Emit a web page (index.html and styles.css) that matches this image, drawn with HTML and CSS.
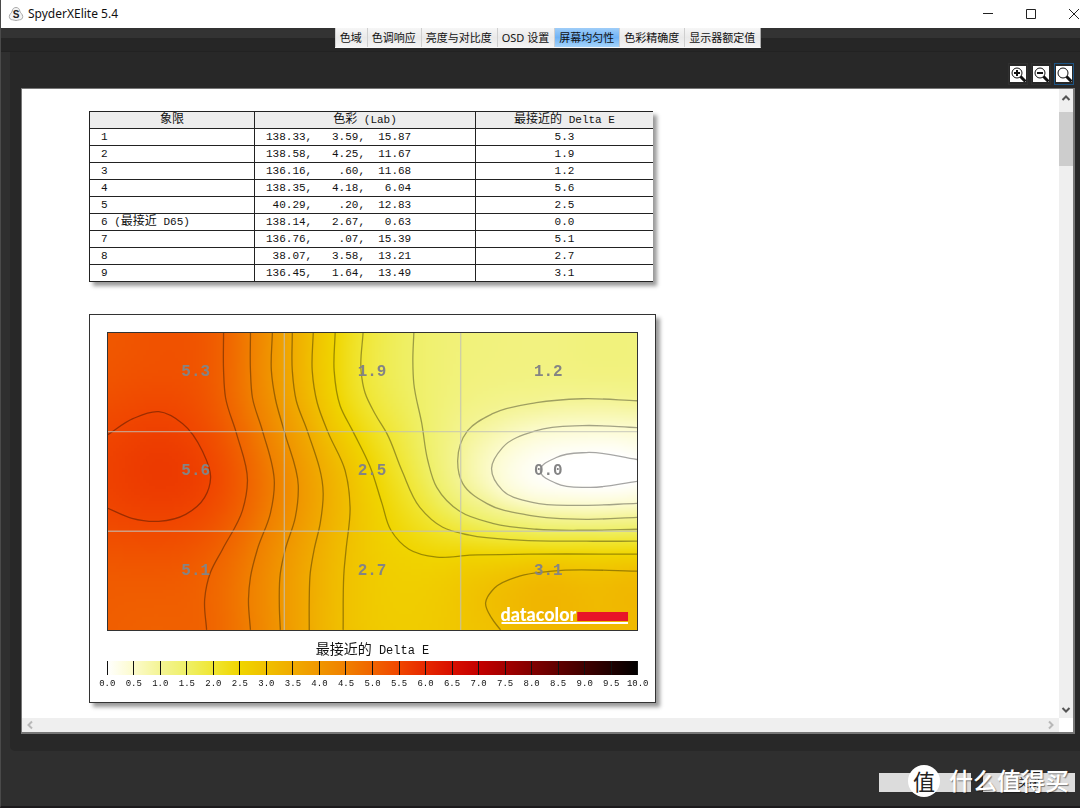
FILE: index.html
```html
<!DOCTYPE html>
<html lang="zh-CN">
<head>
<meta charset="utf-8">
<title>SpyderXElite 5.4</title>
<link rel="stylesheet" href="styles.css">
</head>
<body>
<div class="window">
  <header class="titlebar">
    <svg class="app-icon" viewBox="0 0 16 16" aria-hidden="true">
      <path d="M8 1.500c2.200 0 3.600 1.500 3.800 3.600.2 1.500 2.900 3 2.900 5.400 0 2-1.300 3.300-3.200 3.300-1.200 0-2 .7-3.500.7s-2.300-.7-3.500-.7c-1.900 0-3.200-1.300-3.200-3.300 0-2.400 2.700-3.900 2.900-5.400C4.400 3 5.800 1.500 8 1.500z" fill="#f4f4f4" stroke="#a8a8a8"/>
      <text class="app-icon-letter" x="8" y="12" text-anchor="middle">S</text>
    </svg>
    <h1 class="title">SpyderXElite 5.4</h1>
    <div class="window-controls">
      <button class="window-button" aria-label="最小化"><svg viewBox="0 0 12 12"><path d="M1 5.500h10"/></svg></button>
      <button class="window-button" aria-label="最大化"><svg viewBox="0 0 12 12"><path d="M1.500 1.500h9v9h-9z"/></svg></button>
      <button class="window-button" aria-label="关闭窗口"><svg viewBox="0 0 12 12"><path d="M1 1l10 10M11 1L1 11"/></svg></button>
    </div>
  </header>

  <nav class="tab-row">
    <div class="tabs" role="tablist">
      <button class="tab" role="tab">色域</button>
      <button class="tab" role="tab">色调响应</button>
      <button class="tab" role="tab">亮度与对比度</button>
      <button class="tab" role="tab">OSD 设置</button>
      <button class="tab tab-active" role="tab" aria-selected="true">屏幕均匀性</button>
      <button class="tab" role="tab">色彩精确度</button>
      <button class="tab" role="tab">显示器额定值</button>
    </div>
  </nav>

  <main class="panel">
    <div class="toolbar">
      <button class="tool" aria-label="放大"><svg viewBox="0 0 16 16"><circle cx="7" cy="7" r="5"/><path class="handle" d="M10.500 10.500l5 5"/><path class="sign" d="M4 7h6M7 4v6"/></svg></button>
      <button class="tool" aria-label="缩小"><svg viewBox="0 0 16 16"><circle cx="7" cy="7" r="5"/><path class="handle" d="M10.500 10.500l5 5"/><path class="sign" d="M4 7h6"/></svg></button>
      <button class="tool tool-focus" aria-label="适合窗口"><svg viewBox="0 0 16 16"><circle cx="7" cy="7" r="5"/><path class="handle" d="M10.500 10.500l5 5"/></svg></button>
    </div>

    <div class="viewport">
      <div class="report">
        <table class="results">
          <thead>
            <tr><th class="col-zone"><span class="han">象限</span></th><th class="col-lab"><span class="han">色彩</span> (Lab)</th><th class="col-delta"><span class="han">最接近的</span> Delta E</th></tr>
          </thead>
          <tbody>
            <tr><td>1</td><td>138.33,   3.59,  15.87</td><td>5.3</td></tr>
            <tr><td>2</td><td>138.58,   4.25,  11.67</td><td>1.9</td></tr>
            <tr><td>3</td><td>136.16,    .60,  11.68</td><td>1.2</td></tr>
            <tr><td>4</td><td>138.35,   4.18,   6.04</td><td>5.6</td></tr>
            <tr><td>5</td><td> 40.29,    .20,  12.83</td><td>2.5</td></tr>
            <tr><td>6 (<span class="han">最接近</span> D65)</td><td>138.14,   2.67,   0.63</td><td>0.0</td></tr>
            <tr><td>7</td><td>136.76,    .07,  15.39</td><td>5.1</td></tr>
            <tr><td>8</td><td> 38.07,   3.58,  13.21</td><td>2.7</td></tr>
            <tr><td>9</td><td>136.45,   1.64,  13.49</td><td>3.1</td></tr>
          </tbody>
        </table>

        <figure class="chart">
          <div class="map">
            <canvas class="heat" width="177" height="100"></canvas>
            <svg class="overlay" viewBox="0 0 531 298">
              <g class="contours"></g>
              <path class="grid" d="M177 0v298M354 0v298M0 99h531M0 199h531"/>
              <g class="zone-labels" text-anchor="middle">
                <text x="88" y="43">5.3</text><text x="265" y="43">1.9</text><text x="442" y="43">1.2</text>
                <text x="88" y="143">5.6</text><text x="265" y="143">2.5</text><text x="442" y="143">0.0</text>
                <text x="88" y="243">5.1</text><text x="265" y="243">2.7</text><text x="442" y="243">3.1</text>
              </g>
              <text class="logo" x="394" y="289">datacolor</text>
              <path d="M471 280h51v9h-51z" fill="#e81428"/>
              <path d="M395 290h127v2H395z" fill="#fff"/>
            </svg>
          </div>
          <figcaption class="scale-title"><span class="han">最接近的</span> Delta E</figcaption>
          <div class="scale">
            <div class="ramp"></div>
            <div class="ticks"></div>
          </div>
          <div class="scale-labels">
            <span>0.0</span><span>0.5</span><span>1.0</span><span>1.5</span><span>2.0</span><span>2.5</span><span>3.0</span><span>3.5</span><span>4.0</span><span>4.5</span><span>5.0</span><span>5.5</span><span>6.0</span><span>6.5</span><span>7.0</span><span>7.5</span><span>8.0</span><span>8.5</span><span>9.0</span><span>9.5</span><span>10.0</span>
          </div>
        </figure>
      </div>
      <div class="scroll-y" aria-hidden="true">
        <svg class="arrow" viewBox="0 0 12 12"><path d="M2.500 8L6 4.500 9.500 8"/></svg>
        <div class="thumb"></div>
        <svg class="arrow arrow-end" viewBox="0 0 12 12"><path d="M2.500 4L6 7.500 9.500 4"/></svg>
      </div>
      <div class="scroll-x" aria-hidden="true">
        <svg class="arrow arrow-off" viewBox="0 0 12 12"><path d="M8 2.500L4.500 6 8 9.500"/></svg>
        <svg class="arrow arrow-off" viewBox="0 0 12 12"><path d="M4 2.500L7.500 6 4 9.500"/></svg>
      </div>
    </div>
  </main>

  <footer class="actions">
    <button class="action" aria-label="打印"></button>
    <button class="action">关闭</button>
    <div class="watermark"><span class="seal">值</span><span class="brand">什么值得买</span></div>
  </footer>
</div>
<script src="chart.js"></script>
</body>
</html>
```
FILE: styles.css
```css
* { box-sizing: border-box; }

body {
  margin: 0;
  background: #2f2f2f;
  font-family: "Noto Sans", "Noto Sans CJK SC", sans-serif;
  font-size: 12px;
  color: #111;
}

button { font: inherit; color: inherit; padding: 0; border: 0; }

.window {
  display: flex;
  flex-direction: column;
  min-height: 100vh;
  border-left: 1px solid #4a4a4a;
  border-bottom: 2px solid #1c1a1c;
  overflow: hidden;
}

.titlebar {
  display: flex;
  align-items: center;
  height: 28px;
  padding-left: 7px;
  background: #fff;
}
.app-icon { width: 16px; height: 16px; }
.app-icon-letter { font: bold 10px "Liberation Sans", sans-serif; fill: #222; }
.title { margin: 0 auto 0 4px; font-size: 12px; line-height: 16px; font-weight: 400; }
.window-controls { display: flex; gap: 31px; }
.window-button { width: 12px; height: 12px; background: none; }
.window-button svg { display: block; width: 12px; height: 12px; fill: none; stroke: #222; }

.tab-row {
  display: flex;
  justify-content: center;
  height: 24px;
  padding-left: 15px;
  background: linear-gradient(#333 0 10px, #262626 10px 23px, #222 23px);
}
.tabs {
  display: flex;
  height: 20px;
  border-bottom: 1px solid #f8f8f8;
  border-right: 1px solid #aaa;
}
.tab {
  padding: 0 5px 0 4px;
  font-size: 11px;
  line-height: 18px;
  white-space: nowrap;
  background: linear-gradient(#f6f6f6, #e9e9e9 50%, #f4f4f4);
  border-left: 1px solid #cfcfcf;
}
.tab-active { background: linear-gradient(#9fcdf8, #6fb3f6 50%, #a5d4fb); }

.panel {
  flex: 1;
  display: flex;
  flex-direction: column;
  margin-left: 9px;
  padding: 11px 5px 17px 11px;
  background: #282828;
  border-radius: 0 0 0 5px;
}
.toolbar {
  display: flex;
  justify-content: flex-end;
  gap: 3px;
  margin-bottom: 3px;
  padding-right: 1px;
}
.tool { width: 20px; height: 22px; padding: 2px 1px; border: 1px solid #303030; background: #282828; }
.tool svg {
  display: block;
  width: 16px;
  height: 16px;
  background: #fff;
  fill: none;
  stroke: #111;
}
.tool .handle { stroke-width: 3; }
.tool .sign { stroke-width: 2; }
.tool-focus { border-color: #1d5585; }

.viewport {
  flex: 1;
  display: grid;
  grid-template-columns: 1fr 14px;
  grid-template-rows: 1fr 14px;
  background: #fff;
  border: 1px solid #777;
  border-right-width: 2px;
  border-bottom-width: 2px;
}
.report { padding: 22px 0 14px 67px; }

.results {
  width: 564px;
  border-collapse: collapse;
  font-family: "Liberation Mono", "Noto Sans CJK SC", monospace;
  font-size: 11px;
  line-height: 16px;
  box-shadow: 4px 4px 4px rgba(0, 0, 0, .4);
}
.results th, .results td {
  height: 17px;
  padding: 0 11px;
  border: 1px solid #222;
  border-right: 0;
  font-weight: 400;
  text-align: left;
  white-space: pre;
  line-height: 16px;
  background: #fff;
}
.results th { background: #ededed; text-align: center; }
.results td:last-child { text-align: center; }
.results .han { font-size: 12px; line-height: 12px; }
.col-zone { width: 165px; }
.col-lab { width: 221px; }

.chart {
  width: 567px;
  margin: 32px 0 0;
  padding: 17px;
  padding-bottom: 9px;
  border: 1px solid #333;
  background: #fff;
  box-shadow: 4px 4px 4px rgba(0, 0, 0, .4);
  font-family: "Liberation Mono", "Noto Sans CJK SC", monospace;
}
.map { display: grid; border: 1px solid #333; }
.heat, .overlay { grid-area: 1 / 1; display: block; width: 100%; }
.heat { height: 0; min-height: 100%; }
.contours { fill: none; stroke: #000; stroke-opacity: .35; stroke-width: 1.300; }
.grid { fill: none; stroke: #c0c0b8; stroke-opacity: .7; stroke-width: 1.400; }
.zone-labels { font-size: 16px; font-weight: 700; fill: #848484; }
.logo { font-family: Lato, sans-serif; font-size: 18px; font-weight: 900; fill: #fff; }

.scale-title {
  margin-top: 10px;
  text-align: center;
  font-size: 12px;
  line-height: 20px;
}
.scale-title .han { font-size: 14px; line-height: 14px; }
.scale { display: grid; }
.ramp, .ticks { grid-area: 1 / 1; height: 14px; }
.ramp {
  background: linear-gradient(90deg, #fff, #fcfbcc 5%, #f4f494 10%, #eff068 15%, #f0e632 20%, #f0d500 25%, #f0c000 30%, #f0ab00 35%, #f09600 40%, #f08000 45%, #f06400 50%, #f04600 55%, #e62800 60%, #d80f00 65%, #c40000 70%, #a40000 75%, #820000 80%, #600000 85%, #400000 90%, #200000 95%, #000);
}
.ticks, .scale-labels {
  display: grid;
  grid-template-columns: repeat(21, 1fr);
  justify-items: center;
  margin: 0 -13px;
}
.ticks span { width: 1px; background: #111; }
.scale-labels { font-size: 9px; line-height: 18px; }
.scale-labels span { width: 0; display: flex; justify-content: center; }

.scroll-y, .scroll-x { display: flex; background: #efefef; }
.scroll-y { flex-direction: column; align-items: center; padding: 3px 0 2px; }
.scroll-x { justify-content: space-between; align-items: center; padding: 0 2px; }
.arrow { width: 12px; height: 12px; fill: none; stroke: #555; stroke-width: 2; }
.arrow-off { stroke: #b8b8b8; }
.arrow-end { margin-top: auto; }
.thumb { align-self: stretch; height: 54px; margin-top: 8px; background: #cdcdcd; }

.actions {
  position: relative;
  display: flex;
  justify-content: flex-end;
  align-items: flex-start;
  gap: 12px;
  height: 55px;
  padding: 22px 5px 0;
}
.action { width: 92px; height: 19px; font-size: 11px; line-height: 18px; background: #dcdcdc; }
.watermark {
  position: absolute;
  right: 11px;
  top: 14px;
  display: flex;
  align-items: center;
  gap: 9px;
  color: #fff;
  pointer-events: none;
}
.seal {
  width: 32px;
  height: 32px;
  border-radius: 50%;
  background: #fff;
  color: #222;
  font-size: 22px;
  line-height: 32px;
  text-align: center;
}
.brand { font-size: 24px; line-height: 32px; font-weight: 500; white-space: nowrap; text-shadow: 1px 1px 1px rgba(0, 0, 0, .45); }
```
FILE: chart.js
```js
// Contour lines of the Delta E field, in map units (531 x 298).
const contours = [
  [5.5, [[0,102],[25,86],[51,79],[75,91],[95,119],[103,145],[97,165],[78,182],[51,189],[24,186],[0,176]]],
  [5, [[116,0],[116,38],[118,65],[129,101],[140,148],[135,178],[115,217],[103,240],[97,268],[99,298]]],
  [4.5, [[143,0],[143,38],[145,65],[155,98],[167,151],[163,181],[150,217],[143,245],[141,268],[143,298]]],
  [4, [[165,0],[164,38],[168,66],[177,99],[191,153],[188,185],[178,217],[173,241],[172,275],[173,298]]],
  [3.5, [[185,0],[185,38],[189,68],[200,98],[216,161],[213,191],[207,217],[203,241],[202,268],[202,298]]],
  [3, [[206,0],[205,38],[210,70],[221,100],[238,138],[243,175],[239,217],[237,238],[236,298]]],
  [2.5, [[228,0],[227,38],[233,73],[246,99],[263,134],[275,171],[284,198],[302,217],[330,225],[363,223],[423,222],[531,222]]],
  [2, [[256,0],[254,38],[258,60],[268,81],[280,101],[295,138],[313,175],[336,195],[363,203],[413,208],[480,209],[531,209]]],
  [1.5, [[307,0],[306,28],[307,51],[315,91],[321,128],[330,155],[353,179],[386,191],[430,197],[480,198],[531,197]]],
  [1, [[531,68],[476,66],[430,70],[386,81],[361,98],[351,128],[356,151],[380,171],[423,183],[480,187],[531,185]]],
  [0.5, [[531,95],[476,93],[430,98],[396,115],[385,136],[396,158],[426,170],[473,173],[531,171]]],
  [0.05, [[531,127],[480,120],[450,125],[434,138],[450,151],[483,155],[531,149]]],
  [3, [[531,239],[446,239],[413,244],[388,256],[379,271],[385,286],[394,298]]]
];

// Peaks, valleys and corners that no contour passes through.
const anchors = [
  [51,138,5.7],[0,0,5.2],[55,0,5.3],[55,38,5.32],[0,50,5.28],[0,298,5.1],[50,298,5.05],[50,250,5.15],[0,235,5.2],
  [531,0,1.25],[442,0,1.22],[442,38,1.2],[370,0,1.28],[490,138,-0.1],[531,138,-0.08],
  [490,275,3.15],[531,298,3.15],[300,298,2.72],[340,270,2.78]
];

const ramp = [
  [255,255,255],[252,251,204],[244,244,148],[239,240,104],[240,230,50],[240,213,0],[240,192,0],
  [240,171,0],[240,150,0],[240,128,0],[240,100,0],[240,70,0],[230,40,0]
];

// Tangent of unit length at point i.
function direction(points, i) {
  const a = points[i - 1] || points[i];
  const b = points[i];
  const c = points[i + 1] || points[i];
  const before = Math.hypot(b[0] - a[0], b[1] - a[1]);
  const after = Math.hypot(c[0] - b[0], c[1] - b[1]);
  const slope = axis =>
    (before ? (b[axis] - a[axis]) / before * (after || 1) : 0) +
    (after ? (c[axis] - b[axis]) / after * (before || 1) : 0);
  const dx = slope(0);
  const dy = slope(1);
  const length = Math.hypot(dx, dy);
  return [dx / length, dy / length];
}

// Smooth path through the points of one contour.
function smoothPath(points) {
  let d = `M${points[0]}`;
  for (let i = 0; i < points.length - 1; i++) {
    const b = points[i];
    const c = points[i + 1];
    const reach = Math.hypot(c[0] - b[0], c[1] - b[1]) / 3;
    const s = direction(points, i);
    const e = direction(points, i + 1);
    d += `C${b[0] + s[0] * reach},${b[1] + s[1] * reach} ${c[0] - e[0] * reach},${c[1] - e[1] * reach} ${c}`;
  }
  return d;
}

// Thin plate spline through all samples.
function basis(dx, dy) {
  const r2 = dx * dx + dy * dy;
  return r2 ? r2 * Math.log(r2) : 0;
}

function fit(samples) {
  const n = samples.length;
  const size = n + 3;
  const m = Array.from({ length: size }, () => new Float64Array(size + 1));
  samples.forEach(([x, y, v], i) => {
    samples.forEach(([u, w], j) => { m[i][j] = basis(x - u, y - w); });
    m[i][i] = 0.002;
    [1, x, y].forEach((term, k) => { m[i][n + k] = term; m[n + k][i] = term; });
    m[i][size] = v;
  });
  for (let col = 0; col < size; col++) {
    let pivot = col;
    for (let r = col + 1; r < size; r++) {
      if (Math.abs(m[r][col]) > Math.abs(m[pivot][col])) pivot = r;
    }
    [m[col], m[pivot]] = [m[pivot], m[col]];
    for (let r = col + 1; r < size; r++) {
      const f = m[r][col] / m[col][col];
      for (let k = col; k <= size; k++) m[r][k] -= f * m[col][k];
    }
  }
  const w = new Float64Array(size);
  for (let r = size - 1; r >= 0; r--) {
    let sum = m[r][size];
    for (let k = r + 1; k < size; k++) sum -= m[r][k] * w[k];
    w[r] = sum / m[r][r];
  }
  return (x, y) => {
    let v = w[n] + w[n + 1] * x + w[n + 2] * y;
    for (let i = 0; i < n; i++) v += w[i] * basis(x - samples[i][0], y - samples[i][1]);
    return v;
  };
}

const samples = anchors.map(([x, y, v]) => [x / 100, y / 100, v]);
contours.forEach(([level, points]) => {
  points.forEach(([x, y]) => samples.push([x / 100, y / 100, level]));
});
const field = fit(samples);

const canvas = document.querySelector(".heat");
const context = canvas.getContext("2d");
const image = context.createImageData(canvas.width, canvas.height);
for (let j = 0; j < canvas.height; j++) {
  for (let i = 0; i < canvas.width; i++) {
    const value = field((i + 0.5) / canvas.width * 5.31, (j + 0.5) / canvas.height * 2.98);
    const t = Math.min(Math.max(value * 2, 0), ramp.length - 1.001);
    const k = Math.floor(t);
    const at = (j * canvas.width + i) * 4;
    for (let c = 0; c < 3; c++) {
      image.data[at + c] = ramp[k][c] + (ramp[k + 1][c] - ramp[k][c]) * (t - k);
    }
    image.data[at + 3] = 255;
  }
}
context.putImageData(image, 0, 0);

const group = document.querySelector(".contours");
contours.forEach(([, points]) => {
  const path = document.createElementNS("http://www.w3.org/2000/svg", "path");
  path.setAttribute("d", smoothPath(points));
  group.append(path);
});

const ticks = document.querySelector(".ticks");
for (let i = 0; i <= 20; i++) ticks.append(document.createElement("span"));
```
